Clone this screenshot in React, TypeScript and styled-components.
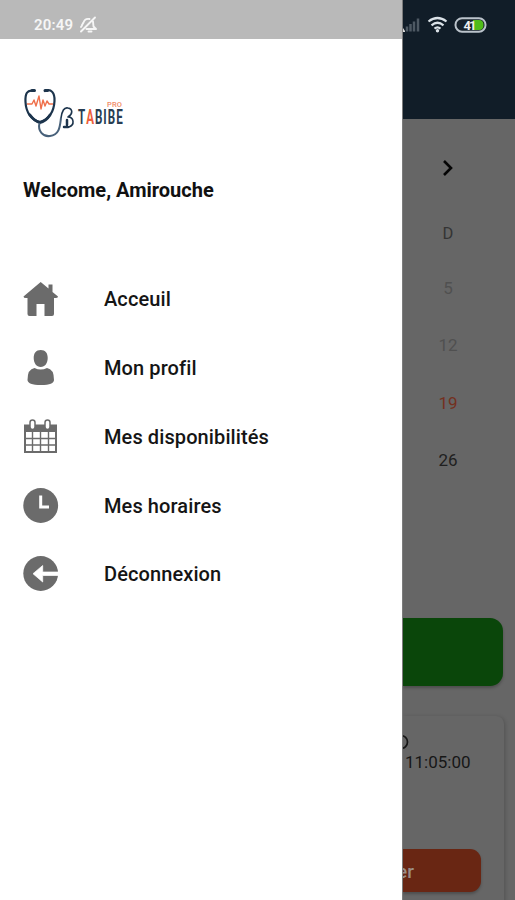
import React from "react";
import styled, { createGlobalStyle } from "styled-components";

const GlobalStyle = createGlobalStyle`
  * { box-sizing: border-box; }
  body { margin: 0; background: #666; font-family: Roboto, "Liberation Sans", sans-serif; }
`;

const Screen = styled.div`
  display: grid;
  grid-template-columns: 402px 113px;
  width: 515px;
  height: 900px;
  overflow: hidden;
`;

const Drawer = styled.aside`
  background: #fff;
  height: 900px;
`;

const DrawerStatus = styled.div`
  display: flex;
  align-items: center;
  gap: 5px;
  height: 39px;
  padding: 11px 0 0 34px;
  background: #b9b9b9;
  color: #f6f6f6;
`;

const Clock = styled.span`
  width: 40px;
  font-size: 15px;
  font-weight: 600;
  line-height: 20px;
  letter-spacing: 0.2px;
  white-space: nowrap;
`;

const LogoRow = styled.div`
  height: 103px;
  padding: 47px 0 0 23px;
`;

const Welcome = styled.h1`
  margin: 0;
  height: 123px;
  padding: 36px 0 0 23px;
  font-size: 20px;
  line-height: 24px;
  font-weight: 700;
  letter-spacing: 0;
  color: #111;
`;

const Menu = styled.nav`
  display: flex;
  flex-direction: column;
`;

const MenuItem = styled.a`
  display: flex;
  align-items: center;
  height: 68.75px;
  padding-left: 22px;
  gap: 44px;
  color: #151515;
  font-size: 20px;
  font-weight: 500;
  letter-spacing: 0.1px;

  svg { flex: none; color: #6b6b6b; }
`;

const Page = styled.main`
  display: flex;
  flex-direction: column;
  height: 900px;
  background: #666;
  border-left: 1px solid #7c7c7c;
  overflow: hidden;
`;

const Header = styled.header`
  display: flex;
  align-items: flex-start;
  flex: none;
  height: 119px;
  padding-top: 14px;
  background: #111d28;
`;

const Calendar = styled.section`
  display: flex;
  flex-direction: column;
  align-items: center;
  width: 90px;
  flex: none;
  height: 499px;
  padding-top: 1px;
`;

const MonthArrow = styled.div`
  display: flex;
  align-items: center;
  height: 96px;
`;

const Weekday = styled.div`
  height: 34px;
  line-height: 36px;
  font-size: 16.5px;
  color: #343434;
`;

const Day = styled.div<{ $color: string }>`
  height: 57.3px;
  line-height: 77px;
  font-size: 17px;
  color: ${(p) => p.$color};
`;

const ConfirmButton = styled.div`
  flex: none;
  width: 100px;
  height: 68px;
  border-radius: 0 13px 13px 0;
  background: #0a460a;
  box-shadow: 0 2px 3px rgba(0, 0, 0, 0.25);
`;

const Card = styled.article`
  flex: none;
  width: 101px;
  height: 190px;
  margin-top: 30px;
  padding-top: 18px;
  border-radius: 0 8px 0 0;
  background: #666;
  box-shadow: 1px 1px 4px rgba(0, 0, 0, 0.2);
`;

const CardIcon = styled.div`
  height: 18px;
  svg { display: block; }
`;

const Time = styled.div`
  padding-left: 2px;
  height: 97px;
  line-height: 21px;
  font-size: 17px;
  color: #161616;
`;

const CancelButton = styled.div`
  width: 78px;
  height: 43px;
  border-radius: 0 11px 11px 0;
  background: #692613;
  color: #9b8d86;
  box-shadow: 0 2px 3px rgba(0, 0, 0, 0.25);
  font-size: 19px;
  font-weight: 500;
  line-height: 45px;
  overflow: hidden;
  text-indent: -6px;
`;

const MutedBell = () => (
  <svg width="19" height="18" viewBox="0 0 19 18" fill="none" stroke="currentColor" strokeWidth="1.9" strokeLinecap="round" strokeLinejoin="round">
    <path d="M3 9L4.5 6.500C5.500 3.500 8 2.500 10.500 3M14 5.500L14.500 10.500L17 13H7.500M9.500 15.500h3M16 1.500L2 15.500M3 9.500L2 11" />
  </svg>
);

const Logo = () => (
  <svg width="104" height="54" viewBox="0 0 104 54" fill="none">
    <g stroke="#1c344c" strokeLinecap="round" strokeLinejoin="round">
      <path strokeWidth="2.2" d="M11 5C4 3 2 8 2.5 16C3 26 8 34 17 36C26 33 31 25 31.5 15C32 7 28 2 22 5" />
      <path strokeWidth="3" d="M9 4.5h2.5M22 4.5h2.5" />
      <path strokeWidth="2.8" d="M7 29C10 33 13 36 17 36.5C21 36 25 32 27 29" />
      <path strokeWidth="1.6" d="M38 32C39 25 41 21 45 22C50 23 50 28 45 31C51 31 52 39 46 41H44" />
      <path strokeWidth="2.5" d="M44 34v5M41 41h4" />
    </g>
    <path stroke="#48617a" strokeWidth="2" d="M16.500 37C14.500 45 20 51 27 50C37 49 37 39 38 32" />
    <path stroke="#ef704b" strokeWidth="1.4" strokeLinejoin="round" d="M4 18H9L11 14L13 20L16 10L18 23L20 14L22 20L24 15L26 18H30" />
    <g fontFamily="Roboto, sans-serif">
      <text x="84" y="21" fontSize="7.5" fontWeight="500" fill="#f08b66" textLength="15">PRO</text>
      <text transform="translate(55 38) scale(.58 1)" fontSize="20" fontWeight="700" fill="#273d52" textLength="77" lengthAdjust="spacing">T<tspan fill="#ee603c">A</tspan>BIBE</text>
    </g>
  </svg>
);

const HomeIcon = () => (
  <svg width="38" height="38" viewBox="0 0 38 38" fill="currentColor">
    <path d="M18.7 2L1.5 16.5Q1.5 18.5 5.5 18V34Q5.5 36 7.5 36H14.500V24H22.500V36H30Q32 36 32 34V18Q36 18.5 36 16.5L30.5 12V4.5H26.5V8.5Z" />
  </svg>
);

const ProfileIcon = () => (
  <svg width="38" height="38" viewBox="0 0 38 38" fill="currentColor">
    <path d="M18.700 1C23.5 1 25.700 4 25.700 9C25.700 14 23 18 18.700 18C14.500 18 11.700 14 11.700 9C11.700 4 14 1 18.700 1ZM12.500 19Q18.700 22 25 19Q32 20 32 31C32 34 28 36 19 36C10 36 5.500 34 5.500 31Q5.500 20 12.500 19Z" />
  </svg>
);

const CalendarIcon = () => (
  <svg width="38" height="38" viewBox="0 0 38 38" fill="none" stroke="currentColor">
    <path fill="currentColor" stroke="none" d="M2 6.500H35V14H2Z" />
    <path strokeWidth="2" d="M3 8V34H34V8" />
    <path strokeWidth="1.4" d="M3 20.500H34M3 27H34M10.500 14V34M18.500 14V34M26.500 14V34" />
    <rect x="8" y="2" width="5" height="9.500" rx="2.500" fill="#fff" strokeWidth="1.500" />
    <rect x="23" y="2" width="5" height="9.500" rx="2.500" fill="#fff" strokeWidth="1.500" />
  </svg>
);

const HoursIcon = () => (
  <svg width="38" height="38" viewBox="0 0 38 38">
    <circle cx="18.700" cy="18.500" r="17.400" fill="currentColor" />
    <path d="M18.700 8.500V20H27" fill="none" stroke="#fff" strokeWidth="3" />
  </svg>
);

const LogoutIcon = () => (
  <svg width="38" height="38" viewBox="0 0 38 38">
    <circle cx="18.700" cy="18.500" r="17.400" fill="currentColor" />
    <path d="M11 18.700L20.700 10.500V17H37V20.500H20.700V27Z" fill="#fff" stroke="#fff" strokeWidth=".7" strokeLinejoin="round" />
  </svg>
);

const StatusIcons = () => (
  <svg width="100" height="22" viewBox="0 0 100 22">
    <path d="M0 14L2 17V18H0Z" fill="#ddd" />
    <path d="M4 13V18M7.500 10.500V18M11 8V18M15 5V18" stroke="#4e5963" strokeWidth="2.500" transform="translate(0 -.500)" />
    <g fill="none" stroke="#dbe2e8" strokeWidth="2.200">
      <path d="M25.500 7.500Q34.500 .500 43.500 7.500" />
      <path d="M28.500 11.300Q34.500 6.200 40.500 11.300" />
      <path d="M31.500 14.700Q34.500 12.200 37.500 14.700" />
    </g>
    <circle cx="34.500" cy="16.800" r="1.700" fill="#dbe2e8" />
    <rect x="52.500" y="4.200" width="30" height="13.500" rx="6.500" fill="#15202a" stroke="#bbc3cb" strokeWidth="2" />
    <path d="M70 6H76Q80.500 6 80.500 11T76 16H70Z" fill="#50bb19" />
    <text x="60.500" y="15.500" fontFamily="Roboto, sans-serif" fontSize="13" fontWeight="700" fill="#eee" textLength="13">41</text>
  </svg>
);

const items = [
  { label: "Acceuil", Icon: HomeIcon },
  { label: "Mon profil", Icon: ProfileIcon },
  { label: "Mes disponibilités", Icon: CalendarIcon },
  { label: "Mes horaires", Icon: HoursIcon },
  { label: "Déconnexion", Icon: LogoutIcon },
];

const days = [
  { day: 5, color: "#505050" },
  { day: 12, color: "#505050" },
  { day: 19, color: "#74301f" },
  { day: 26, color: "#202020" },
];

export default function App() {
  return (
    <>
      <GlobalStyle />
      <Screen>
        <Drawer>
          <DrawerStatus><Clock>20:49</Clock><MutedBell /></DrawerStatus>
          <LogoRow><Logo /></LogoRow>
          <Welcome>Welcome, Amirouche</Welcome>
          <Menu>
            {items.map(({ label, Icon }) => (
              <MenuItem key={label}><Icon /><span>{label}</span></MenuItem>
            ))}
          </Menu>
        </Drawer>
        <Page>
          <Header><StatusIcons /></Header>
          <Calendar>
            <MonthArrow>
              <svg width="14" height="18" viewBox="0 0 14 18" fill="none" stroke="#050505" strokeWidth="2.600">
                <path d="M3 2L10 9L3 16" />
              </svg>
            </MonthArrow>
            <Weekday>D</Weekday>
            {days.map(({ day, color }) => <Day key={day} $color={color}>{day}</Day>)}
          </Calendar>
          <ConfirmButton />
          <Card>
            <CardIcon>
              <svg width="8" height="17" viewBox="0 0 8 17" fill="none" stroke="#161616" strokeWidth="1.700">
                <circle cx="-2" cy="8" r="6.500" />
              </svg>
            </CardIcon>
            <Time>11:05:00</Time>
            <CancelButton>er</CancelButton>
          </Card>
        </Page>
      </Screen>
    </>
  );
}
